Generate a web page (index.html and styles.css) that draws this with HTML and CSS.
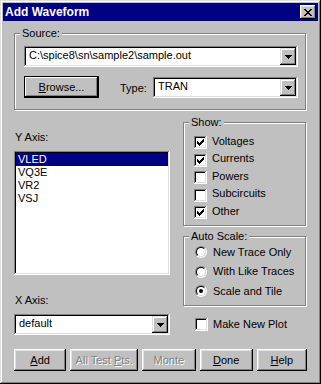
FILE: index.html
```html
<!DOCTYPE html>
<html>
  <head>
    <title>Add Waveform</title>
    <link rel="stylesheet" href="styles.css">
  </head>
  <body>
    <div class="window">
      <div class="titlebar">
        <span class="title">Add Waveform</span>
        <span class="close">
          <svg width="8" height="7" viewBox="0 0 8 7" shape-rendering="crispEdges">
            <path d="M0 0h2v1h-2zM6 0h2v1h-2zM1 1h2v1h-2zM5 1h2v1h-2zM2 2h4v1h-4zM3 3h2v1h-2zM2 4h4v1h-4zM1 5h2v1h-2zM5 5h2v1h-2zM0 6h2v1h-2zM6 6h2v1h-2z" fill="#000"/>
          </svg>
        </span>
      </div>
      <div class="content">
        <fieldset class="group source">
          <legend>Source:</legend>
          <div class="combo source-combo">
            <span class="combo-text">C:\spice8\sn\sample2\sample.out</span>
            <span class="drop"><svg width="7" height="4" viewBox="0 0 7 4" shape-rendering="crispEdges"><path d="M0 0h7v1h-7zM1 1h5v1h-5zM2 2h3v1h-3zM3 3h1v1h-1z" fill="#000"/></svg></span>
          </div>
          <div class="source-row">
            <button class="btn default browse"><u>B</u>rowse...</button>
            <span class="type-label">Type:</span>
            <div class="combo type-combo">
              <span class="combo-text">TRAN</span>
              <span class="drop"><svg width="7" height="4" viewBox="0 0 7 4" shape-rendering="crispEdges"><path d="M0 0h7v1h-7zM1 1h5v1h-5zM2 2h3v1h-3zM3 3h1v1h-1z" fill="#000"/></svg></span>
            </div>
          </div>
        </fieldset>

        <div class="middle">
          <div class="left-col">
            <div class="label y-label">Y Axis:</div>
            <div class="listbox">
              <div class="item selected">VLED</div>
              <div class="item">VQ3E</div>
              <div class="item">VR2</div>
              <div class="item">VSJ</div>
            </div>
            <div class="label x-label">X Axis:</div>
            <div class="combo x-combo">
              <span class="combo-text">default</span>
              <span class="drop"><svg width="7" height="4" viewBox="0 0 7 4" shape-rendering="crispEdges"><path d="M0 0h7v1h-7zM1 1h5v1h-5zM2 2h3v1h-3zM3 3h1v1h-1z" fill="#000"/></svg></span>
            </div>
          </div>

          <div class="right-col">
            <fieldset class="group show">
              <legend>Show:</legend>
              <div class="check-row"><span class="box checked"><svg width="7" height="7" viewBox="0 0 7 7" shape-rendering="crispEdges"><path d="M0 2h1v3h-1zM1 3h1v3h-1zM2 4h1v3h-1zM3 3h1v3h-1zM4 2h1v3h-1zM5 1h1v3h-1zM6 0h1v3h-1z" fill="#000"/></svg></span><span class="check-text">Voltages</span></div>
              <div class="check-row"><span class="box checked"><svg width="7" height="7" viewBox="0 0 7 7" shape-rendering="crispEdges"><path d="M0 2h1v3h-1zM1 3h1v3h-1zM2 4h1v3h-1zM3 3h1v3h-1zM4 2h1v3h-1zM5 1h1v3h-1zM6 0h1v3h-1z" fill="#000"/></svg></span><span class="check-text">Currents</span></div>
              <div class="check-row"><span class="box"></span><span class="check-text">Powers</span></div>
              <div class="check-row"><span class="box"></span><span class="check-text">Subcircuits</span></div>
              <div class="check-row"><span class="box checked"><svg width="7" height="7" viewBox="0 0 7 7" shape-rendering="crispEdges"><path d="M0 2h1v3h-1zM1 3h1v3h-1zM2 4h1v3h-1zM3 3h1v3h-1zM4 2h1v3h-1zM5 1h1v3h-1zM6 0h1v3h-1z" fill="#000"/></svg></span><span class="check-text">Other</span></div>
            </fieldset>

            <fieldset class="group scale">
              <legend>Auto Scale:</legend>
              <div class="radio-row"><span class="radio"><span class="radio-in"></span></span><span class="radio-text">New Trace Only</span></div>
              <div class="radio-row"><span class="radio"><span class="radio-in"></span></span><span class="radio-text">With Like Traces</span></div>
              <div class="radio-row"><span class="radio"><span class="radio-in"><span class="dot"></span></span></span><span class="radio-text">Scale and Tile</span></div>
            </fieldset>

            <div class="check-row plot"><span class="box"></span><span class="check-text">Make New Plot</span></div>
          </div>
        </div>

        <div class="buttons">
          <button class="btn add"><u>A</u>dd</button>
          <button class="btn alltest disabled">All Test <u>P</u>ts.</button>
          <button class="btn monte disabled">Monte</button>
          <button class="btn done"><u>D</u>one</button>
          <button class="btn help"><u>H</u>elp</button>
        </div>
      </div>
    </div>
  </body>
</html>
```

FILE: styles.css
```css
body {
  margin: 0;
  background: #c0c0c0;
  font-family: "Liberation Sans", Arial, sans-serif;
  font-size: 11px;
  color: #000;
}
.window {
  width: 321px;
  height: 384px;
  box-sizing: border-box;
  padding: 3px;
  background: #c0c0c0;
  box-shadow: inset -1px -1px #000, inset 1px 1px #dfdfdf, inset -2px -2px #808080, inset 2px 2px #fff;
}
.titlebar {
  height: 18px;
  background: #000080;
  color: #fff;
  display: flex;
  align-items: center;
  justify-content: space-between;
  padding-left: 2px;
}
.title {
  font-weight: bold;
  font-size: 12px;
  line-height: 18px;
}
.close {
  width: 16px;
  height: 14px;
  margin-right: 2px;
  background: #c0c0c0;
  display: flex;
  align-items: center;
  justify-content: center;
  box-shadow: inset -1px -1px #000, inset 1px 1px #fff, inset -2px -2px #808080, inset 2px 2px #dfdfdf;
}
.close svg {
  display: block;
}
.content {
  padding: 6px 11px 0 11px;
}

/* group boxes */
.group {
  margin: 0;
  min-width: 0;
  border: 1px solid #808080;
  box-shadow: inset 1px 1px #fff, 1px 1px #fff;
  padding: 0 0 0 5px;
}
.group legend {
  padding: 0 2px;
  line-height: 13px;
  background: #c0c0c0;
}
.source {
  width: 292px;
  box-sizing: border-box;
  padding: 6px 7px 9px 5px;
}
.source-combo {
  margin-left: 4px;
}
.source-row {
  display: flex;
  align-items: flex-start;
  margin: 9px 0 0 4px;
}
.type-label {
  margin-left: 21px;
  padding-top: 1px;
  line-height: 23px;
}
.type-combo {
  margin-left: auto;
  margin-top: 1px;
  width: 145px;
}

/* sunken combo */
.combo {
  display: flex;
  height: 21px;
  box-sizing: border-box;
  padding: 2px;
  background: #fff;
  box-shadow: inset -1px -1px #fff, inset 1px 1px #808080, inset -2px -2px #dfdfdf, inset 2px 2px #000;
}
.combo-text {
  flex: 1;
  padding-left: 3px;
  line-height: 15px;
  white-space: nowrap;
  overflow: hidden;
}
.drop {
  width: 16px;
  height: 17px;
  box-sizing: border-box;
  background: #c0c0c0;
  display: flex;
  align-items: center;
  justify-content: center;
  box-shadow: inset -1px -1px #000, inset 1px 1px #dfdfdf, inset -2px -2px #808080, inset 2px 2px #fff;
}
.drop svg {
  display: block;
}

/* buttons */
.btn {
  font: inherit;
  color: #000;
  background: #c0c0c0;
  border: none;
  padding: 0;
  height: 22px;
  box-sizing: border-box;
  box-shadow: inset -1px -1px #000, inset 1px 1px #fff, inset -2px -2px #808080, inset 2px 2px #dfdfdf;
}
.btn.default {
  box-shadow: inset 0 0 0 1px #000, inset -2px -2px #000, inset 2px 2px #fff, inset -3px -3px #808080;
}
.btn.disabled {
  color: #808080;
  text-shadow: 1px 1px #fff;
}
.browse {
  width: 75px;
}

/* middle section */
.middle {
  display: grid;
  grid-template-columns: 156px 124px;
  column-gap: 13px;
}
.label {
  line-height: 13px;
}
.y-label {
  margin-top: 21px;
  padding-left: 1px;
}
.listbox {
  margin-top: 7px;
  height: 124px;
  box-sizing: border-box;
  padding: 2px;
  background: #fff;
  box-shadow: inset -1px -1px #fff, inset 1px 1px #808080, inset -2px -2px #dfdfdf, inset 2px 2px #000;
}
.item {
  line-height: 13px;
  padding-left: 2px;
}
.item.selected {
  background: #000080;
  color: #fff;
}
.x-label {
  margin-top: 19px;
  padding-left: 1px;
}
.x-combo {
  margin-top: 7px;
}

.right-col {
  padding-top: 6px;
}
.show,
.scale {
  width: 123px;
  box-sizing: border-box;
}
.show {
  padding-top: 5px;
  padding-bottom: 3px;
}
.scale {
  margin-top: 4px;
  padding-bottom: 4px;
}
.check-row {
  display: flex;
  align-items: center;
  height: 17.5px;
  margin-left: 5px;
}
.box {
  width: 13px;
  height: 13px;
  box-sizing: border-box;
  padding: 3px;
  background: #fff;
  box-shadow: inset -1px -1px #fff, inset 1px 1px #808080, inset -2px -2px #dfdfdf, inset 2px 2px #000;
}
.box svg {
  display: block;
}
.check-text {
  margin-left: 5px;
  margin-bottom: 3px;
  line-height: 13px;
}
.radio-row {
  display: flex;
  align-items: center;
  height: 19.5px;
  margin-left: 6px;
}
.radio {
  width: 12px;
  height: 12px;
  box-sizing: border-box;
  border-radius: 50%;
  border: 1px solid;
  border-color: #808080 #fff #fff #808080;
}
.radio-in {
  display: flex;
  align-items: center;
  justify-content: center;
  width: 10px;
  height: 10px;
  box-sizing: border-box;
  border-radius: 50%;
  border: 1px solid;
  border-color: #000 #dfdfdf #dfdfdf #000;
  background: #fff;
}
.dot {
  width: 4px;
  height: 4px;
  border-radius: 50%;
  background: #000;
}
.radio-text {
  margin-left: 6px;
  line-height: 13px;
}
.plot {
  margin-top: 12px;
  margin-left: 12px;
  height: 13px;
}
.plot .check-text {
  margin-bottom: 0;
}

/* bottom buttons */
.buttons {
  display: flex;
  gap: 4px;
  margin-top: 14px;
}
.add {
  width: 53px;
}
.alltest {
  width: 69px;
}
.monte {
  width: 54px;
}
.done {
  width: 54px;
}
.help {
  width: 51px;
}
```
